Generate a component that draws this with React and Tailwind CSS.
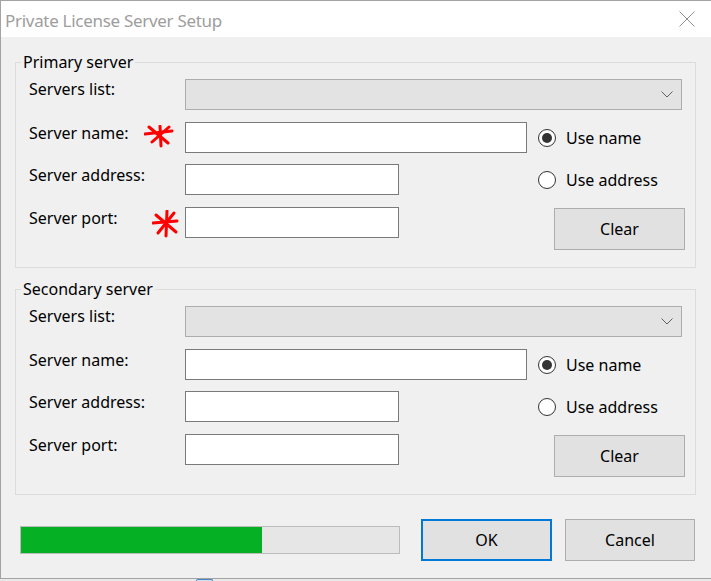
import React from 'react';

const font = "font-['Segoe_UI','Noto_Sans',sans-serif]";

function Asterisk({ big }) {
  if (big) {
    return (
      <svg width="27" height="28" viewBox="0 0 27 28" className="ml-auto mr-[6px] mt-[3px] shrink-0">
        <g stroke="#ff0000" strokeWidth="3" strokeLinecap="round" fill="none">
          <path d="M1 13 L25 11" />
          <path d="M15 1 L14 26" />
          <path d="M4 5 L24 22" />
          <path d="M22 3 L6 23" />
        </g>
      </svg>
    );
  }
  return (
    <svg width="30" height="23" viewBox="0 0 30 23" className="ml-auto mr-[11px] mt-[3px] shrink-0">
      <g stroke="#ff0000" strokeWidth="3" strokeLinecap="round" fill="none">
        <path d="M1 9 L28 6" />
        <path d="M5 2 L24 18" />
        <path d="M16 1 L17 21" />
        <path d="M25 2 L8 17" />
      </g>
    </svg>
  );
}

function Radio({ label, checked }) {
  return (
    <div className="flex items-center h-[31px]">
      <div className="w-[18px] h-[18px] rounded-full border border-[#333333] bg-white flex items-center justify-center">
        {checked && <div className="w-[10px] h-[10px] rounded-full bg-[#333333]" />}
      </div>
      <span className="ml-[10px] text-[16px] leading-[22px] text-black">{label}</span>
    </div>
  );
}

function ServerGroup({ title, marked, className }) {
  return (
    <fieldset className={`w-[681px] ml-[14px] border border-[#dcdcdc] ${className}`}>
      <legend className="ml-[5px] px-[2px] text-[16px] leading-[22px] text-black">{title}</legend>
      <div className="pl-[13px] pb-[17px] text-[16px] leading-[22px] text-black">
        <div className="flex items-start mt-[6px]">
          <div className="w-[156px] -mt-[1px]">Servers list:</div>
          <div className="w-[497px] h-[31px] bg-[#e3e3e3] border border-[#adadad] flex items-center justify-end pr-[8px]">
            <svg width="12" height="7" viewBox="0 0 12 7">
              <polyline points="0.5,0.5 6,6 11.5,0.5" fill="none" stroke="#606060" strokeWidth="1" />
            </svg>
          </div>
        </div>

        <div className="flex mt-[12px]">
          <div className="flex flex-col">
            <div className="flex items-start">
              <div className="w-[156px] flex items-start">
                <span>Server name:</span>
                {marked && <Asterisk />}
              </div>
              <div className="w-[342px] h-[31px] bg-white border border-[#7a7a7a]" />
            </div>
            <div className="flex items-start mt-[11px]">
              <div className="w-[156px]">Server address:</div>
              <div className="w-[214px] h-[31px] bg-white border border-[#7a7a7a]" />
            </div>
            <div className="flex items-start mt-[12px]">
              <div className="w-[156px] flex items-start">
                <span>Server port:</span>
                {marked && <Asterisk big />}
              </div>
              <div className="w-[214px] h-[31px] bg-white border border-[#7a7a7a]" />
            </div>
          </div>

          <div className="flex flex-col ml-[11px]">
            <Radio label="Use name" checked />
            <div className="mt-[11px]">
              <Radio label="Use address" />
            </div>
            <button className="mt-[13px] ml-[16px] w-[131px] h-[42px] bg-[#e1e1e1] border border-[#adadad] text-[16px] text-black">
              Clear
            </button>
          </div>
        </div>
      </div>
    </fieldset>
  );
}

export default function App() {
  return (
    <div className={`w-[711px] h-[581px] overflow-hidden bg-[#e9e9e9] ${font}`}>
      <div className="w-[711px] h-[579px] border-l border-t border-b border-[#a3a3a3] bg-[#f0f0f0] flex flex-col">
        <div className="h-[36px] bg-white flex items-start shrink-0">
          <span className="pl-[4px] pt-[8px] text-[17px] leading-[23px] tracking-[-0.3px] text-[#9d9d9d]">
            Private License Server Setup
          </span>
          <svg width="16" height="16" viewBox="0 0 16 16" className="ml-auto mr-[16px] mt-[10px]">
            <path d="M0.5 0.5 L15.5 15.5 M15.5 0.5 L0.5 15.5" stroke="#8f8f8f" strokeWidth="1" />
          </svg>
        </div>

        <ServerGroup title="Primary server" marked className="mt-[14px]" />
        <ServerGroup title="Secondary server" className="mt-[10px]" />

        <div className="flex items-center mt-[24px]">
          <div className="ml-[19px] w-[380px] h-[28px] bg-[#e6e6e6] border border-[#bcbcbc] flex">
            <div className="w-[241px] h-full bg-[#06b025]" />
          </div>
          <button className="ml-[21px] w-[131px] h-[42px] bg-[#e1e1e1] border-2 border-[#0078d7] text-[16px] text-black">
            OK
          </button>
          <button className="ml-[13px] w-[130px] h-[42px] bg-[#e1e1e1] border border-[#adadad] text-[16px] text-black">
            Cancel
          </button>
        </div>
      </div>
      <div className="h-[2px] flex">
        <div className="ml-[196px] w-[17px] h-[2px] rounded-t-full border-t border-x border-[#4a86c5] bg-[#cfe0f2]" />
      </div>
    </div>
  );
}
